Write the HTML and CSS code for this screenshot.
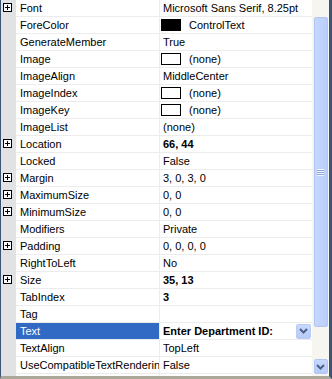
FILE: index.html
```html
<!DOCTYPE html>
<html lang="en">
<head>
  <meta charset="UTF-8" />
  <title>Properties</title>
  <link rel="stylesheet" href="styles.css">
</head>
<body>
  <div class="grid">
    <div class="rows">
      <div class="row"><div class="gutter"><span class="plus"></span></div><div class="name">Font</div><div class="value">Microsoft Sans Serif, 8.25pt</div></div>
      <div class="row"><div class="gutter"></div><div class="name">ForeColor</div><div class="value"><span class="swatch black"></span>ControlText</div></div>
      <div class="row"><div class="gutter"></div><div class="name">GenerateMember</div><div class="value">True</div></div>
      <div class="row"><div class="gutter"></div><div class="name">Image</div><div class="value"><span class="swatch"></span>(none)</div></div>
      <div class="row"><div class="gutter"></div><div class="name">ImageAlign</div><div class="value">MiddleCenter</div></div>
      <div class="row"><div class="gutter"></div><div class="name">ImageIndex</div><div class="value"><span class="swatch"></span>(none)</div></div>
      <div class="row"><div class="gutter"></div><div class="name">ImageKey</div><div class="value"><span class="swatch"></span>(none)</div></div>
      <div class="row"><div class="gutter"></div><div class="name">ImageList</div><div class="value">(none)</div></div>
      <div class="row"><div class="gutter"><span class="plus"></span></div><div class="name">Location</div><div class="value bold">66, 44</div></div>
      <div class="row"><div class="gutter"></div><div class="name">Locked</div><div class="value">False</div></div>
      <div class="row"><div class="gutter"><span class="plus"></span></div><div class="name">Margin</div><div class="value">3, 0, 3, 0</div></div>
      <div class="row"><div class="gutter"><span class="plus"></span></div><div class="name">MaximumSize</div><div class="value">0, 0</div></div>
      <div class="row"><div class="gutter"><span class="plus"></span></div><div class="name">MinimumSize</div><div class="value">0, 0</div></div>
      <div class="row"><div class="gutter"></div><div class="name">Modifiers</div><div class="value">Private</div></div>
      <div class="row"><div class="gutter"><span class="plus"></span></div><div class="name">Padding</div><div class="value">0, 0, 0, 0</div></div>
      <div class="row"><div class="gutter"></div><div class="name">RightToLeft</div><div class="value">No</div></div>
      <div class="row"><div class="gutter"><span class="plus"></span></div><div class="name">Size</div><div class="value bold">35, 13</div></div>
      <div class="row"><div class="gutter"></div><div class="name">TabIndex</div><div class="value bold">3</div></div>
      <div class="row"><div class="gutter"></div><div class="name">Tag</div><div class="value"></div></div>
      <div class="row selected"><div class="gutter"></div><div class="name">Text</div><div class="value bold"><span class="text">Enter Department ID:</span><span class="drop"><svg width="9" height="6" viewBox="0 0 9 6"><path d="M1 1 L4.5 4.5 L8 1" fill="none" stroke="#4d6185" stroke-width="2"/></svg></span></div></div>
      <div class="row"><div class="gutter"></div><div class="name">TextAlign</div><div class="value">TopLeft</div></div>
      <div class="row"><div class="gutter"></div><div class="name">UseCompatibleTextRendering</div><div class="value">False</div></div>
      <div class="row"><div class="gutter"></div><div class="name"></div><div class="value"></div></div>
    </div>
    <div class="scrollbar">
      <div class="track-top"></div>
      <div class="thumb"><span class="grip"></span></div>
      <div class="track-rest"></div>
      <div class="down"><svg width="9" height="6" viewBox="0 0 9 6"><path d="M1 1 L4.5 4.5 L8 1" fill="none" stroke="#4d6185" stroke-width="2"/></svg></div>
    </div>
  </div>
</body>
</html>
```

FILE: styles.css
```css
body {
  margin: 0;
  font-family: "Liberation Sans", Arial, sans-serif;
  font-size: 11px;
  color: #000;
  background: #fff;
}

.grid {
  display: flex;
  width: 332px;
  height: 379px;
  box-sizing: border-box;
  border-left: 1px solid #3d5373;
  border-right: 3px solid #3d5373;
  border-bottom: 3px solid #aca899;
  overflow: hidden;
}

.rows {
  width: 311px;
  overflow: hidden;
}

.row {
  display: flex;
  height: 17px;
}

.gutter {
  width: 15px;
  background: #e2e2e2;
  position: relative;
}

.plus {
  position: absolute;
  left: 2px;
  top: 3px;
  width: 9px;
  height: 9px;
  box-sizing: border-box;
  border: 1px solid #000;
  background: #fff;
}

.plus::before,
.plus::after {
  content: "";
  position: absolute;
  background: #000;
}

.plus::before {
  left: 1px;
  top: 3px;
  width: 5px;
  height: 1px;
}

.plus::after {
  left: 3px;
  top: 1px;
  width: 1px;
  height: 5px;
}

.name {
  width: 139px;
  padding-left: 4px;
  line-height: 16px;
  border-right: 1px solid #ececec;
  border-bottom: 1px solid #ececec;
  white-space: nowrap;
  overflow: hidden;
}

.value {
  width: 149px;
  padding-left: 3px;
  line-height: 16px;
  border-bottom: 1px solid #ececec;
  display: flex;
  align-items: center;
  white-space: nowrap;
  overflow: hidden;
}

.bold {
  font-weight: bold;
}

.swatch {
  width: 20px;
  height: 12px;
  margin-left: -2px;
  margin-right: 8px;
  box-sizing: border-box;
  border: 1px solid #000;
  background: #fff;
}

.swatch.black {
  background: #000;
}

.selected .name {
  background: #316ac5;
  color: #fff;
}

.selected .text {
  flex: 1;
}

.drop {
  width: 15px;
  height: 15px;
  margin-right: 1px;
  box-sizing: border-box;
  border-radius: 2px;
  background: linear-gradient(#c8d8fd, #b6cbf8);
  border: 1px solid #b8cbf5;
  display: flex;
  align-items: center;
  justify-content: center;
}

/* scrollbar */
.scrollbar {
  width: 17px;
  background: #f6f5f0;
  display: flex;
  flex-direction: column;
  align-items: center;
}

.track-top {
  height: 17px;
  flex-shrink: 0;
}

.thumb {
  width: 14px;
  height: 310px;
  flex-shrink: 0;
  box-sizing: border-box;
  border: 1px solid #b0c5f4;
  border-radius: 2px;
  background: linear-gradient(90deg, #c7d7fd, #bacefb);
  display: flex;
  align-items: center;
  justify-content: center;
}

.grip {
  width: 7px;
  height: 7px;
  background: repeating-linear-gradient(#eef3fe 0 1px, #8ea8e0 1px 2px);
}

.track-rest {
  flex: 1;
}

.down {
  width: 14px;
  height: 15px;
  margin-bottom: 2px;
  box-sizing: border-box;
  border: 1px solid #b0c5f4;
  border-radius: 2px;
  background: linear-gradient(#c8d8fd, #b6cbf8);
  display: flex;
  align-items: center;
  justify-content: center;
}
```
